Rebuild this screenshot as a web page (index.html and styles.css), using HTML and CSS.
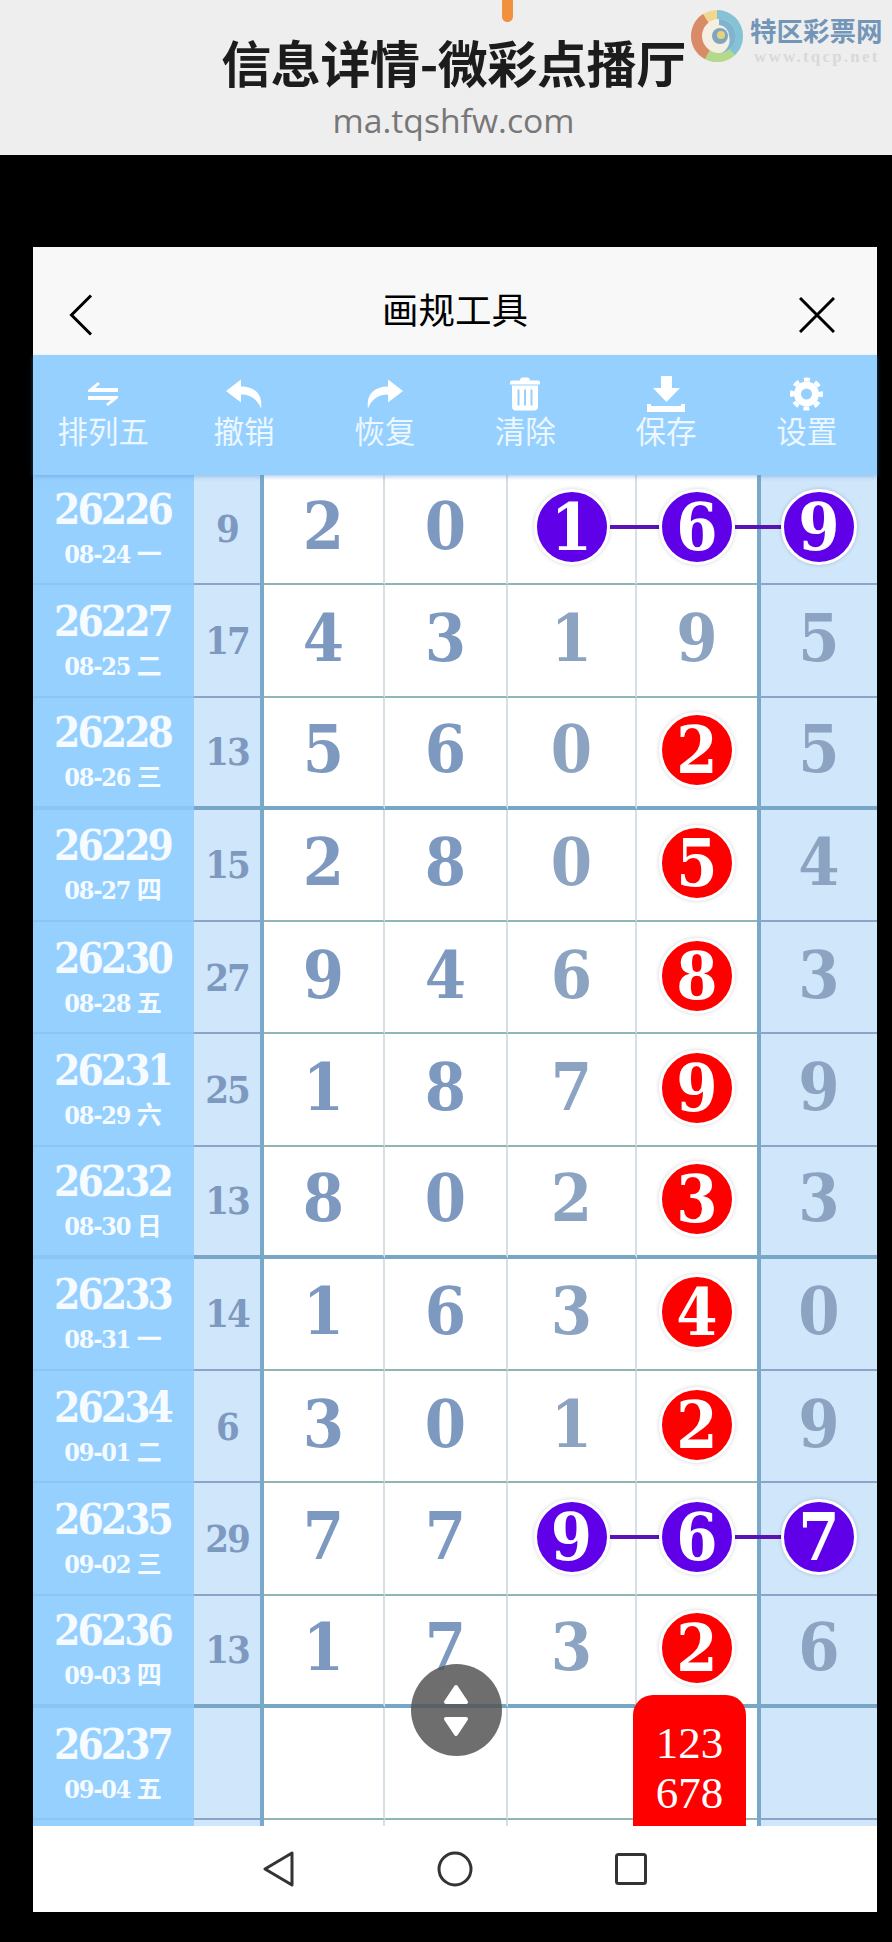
FILE: index.html
```html
<!DOCTYPE html>
<html>

<head>
    <meta charset="utf-8">
    <title>信息详情-微彩点播厅</title>
    <link rel="stylesheet" href="styles.css">
</head>

<body>
    <div class="banner">
        <span class="banner-tick"></span>
        <h1 class="banner-title">信息详情-微彩点播厅</h1>
        <div class="banner-url">ma.tqshfw.com</div>
        <div class="logo">
            <svg class="logo-mark" width="52" height="52" viewBox="0 0 52 52">
                <circle cx="26" cy="26" r="26" fill="#f1d890" />
                <path d="M26 0 A26 26 0 0 1 52 26 A26 26 0 0 1 40 48 L26 26Z" fill="#84c2d8" />
                <path d="M44 45 A26 26 0 0 1 12 48 L26 26Z" fill="#b4d98c" />
                <path d="M14 49 A26 26 0 0 1 12 4 L26 26Z" fill="#d98a66" />
                <circle cx="28" cy="26" r="17" fill="#f4efe2" />
                <path d="M28 9 A17 17 0 0 1 45 26 A17 17 0 0 1 30 43 A14 14 0 0 0 38 26 A11 11 0 0 0 28 15Z" fill="#7fb4d0" />
                <circle cx="29" cy="26" r="8" fill="#7fa5bf" />
                <circle cx="30" cy="25" r="4" fill="#e6d27c" />
            </svg>
            <div class="logo-text">
                <div class="logo-name">特区彩票网</div>
                <div class="logo-site">www.tqcp.net</div>
            </div>
        </div>
    </div>

    <div class="app">
        <div class="header">
            <svg class="header-back" width="24" height="42" viewBox="0 0 24 42">
                <path d="M22 1.5 L2.5 21 L22 40.5" fill="none" stroke="#000" stroke-width="3" />
            </svg>
            <div class="header-title">画规工具</div>
            <svg class="header-close" width="36" height="36" viewBox="0 0 36 36">
                <path d="M1 1 L35 35 M35 1 L1 35" fill="none" stroke="#000" stroke-width="3" />
            </svg>
        </div>

        <div class="toolbar">
            <div class="tool">
                <svg width="30" height="24" viewBox="0 0 30 24">
                    <path d="M0 8 L10 0 L12 2 L7 6 H30 V10 H0Z M30 16 L20 24 L18 22 L23 18 H0 V14 H30Z" fill="#fff" />
                </svg>
                <span>排列五</span>
            </div>
            <div class="tool">
                <svg width="36" height="29" viewBox="0 0 36 29">
                    <path d="M15 0 L0 11.5 L15 23 V15 C24 15 31 19 35 29 C37 15 29 7 15 7Z" fill="#fff" />
                </svg>
                <span>撤销</span>
            </div>
            <div class="tool">
                <svg class="flip" width="36" height="29" viewBox="0 0 36 29">
                    <path d="M15 0 L0 11.5 L15 23 V15 C24 15 31 19 35 29 C37 15 29 7 15 7Z" fill="#fff" />
                </svg>
                <span>恢复</span>
            </div>
            <div class="tool">
                <svg width="30" height="33" viewBox="0 0 30 33">
                    <path d="M10 3 Q10 0 13 0 H17 Q20 0 20 3 H28 Q30 3 30 5 V7 H0 V5 Q0 3 2 3Z" fill="#fff" />
                    <path d="M2 8 H28 V29 Q28 33 24 33 H6 Q2 33 2 29Z" fill="#fff" />
                    <path d="M8.5 12 V28 M15 12 V28 M21.5 12 V28" stroke="#96d0ff" stroke-width="2" />
                </svg>
                <span>清除</span>
            </div>
            <div class="tool">
                <svg width="38" height="36" viewBox="0 0 38 36">
                    <path d="M14 0 H25 V12 H33 L19.5 26 L6 12 H14Z" fill="#fff" />
                    <path d="M0 28 H4 V30 H34 V28 H38 V36 H0Z" fill="#fff" />
                </svg>
                <span>保存</span>
            </div>
            <div class="tool">
                <svg width="33" height="33" viewBox="0 0 33 33">
                    <circle cx="16.5" cy="16.5" r="9" fill="none" stroke="#fff" stroke-width="7" />
                    <circle cx="16.5" cy="16.5" r="14.5" fill="none" stroke="#fff" stroke-width="4"
                        stroke-dasharray="6 5.39" stroke-dashoffset="3" />
                </svg>
                <span>设置</span>
            </div>
        </div>

        <div class="table">
            <div class="row">
                <div class="issue"><b>26226</b><span>08-24 一</span></div>
                <div class="sum">9</div>
                <div class="num">2</div>
                <div class="num">0</div>
                <div class="num"><span class="ball purple link">1</span></div>
                <div class="num plain"><span class="ball purple link">6</span></div>
                <div class="num last"><span class="ball purple">9</span></div>
            </div>
            <div class="row">
                <div class="issue"><b>26227</b><span>08-25 二</span></div>
                <div class="sum">17</div>
                <div class="num">4</div>
                <div class="num">3</div>
                <div class="num pale">1</div>
                <div class="num plain pale">9</div>
                <div class="num last pale">5</div>
            </div>
            <div class="row row-end">
                <div class="issue"><b>26228</b><span>08-26 三</span></div>
                <div class="sum">13</div>
                <div class="num">5</div>
                <div class="num">6</div>
                <div class="num pale">0</div>
                <div class="num plain"><span class="ball red">2</span></div>
                <div class="num last pale">5</div>
            </div>
            <div class="row">
                <div class="issue"><b>26229</b><span>08-27 四</span></div>
                <div class="sum">15</div>
                <div class="num">2</div>
                <div class="num">8</div>
                <div class="num pale">0</div>
                <div class="num plain"><span class="ball red">5</span></div>
                <div class="num last pale">4</div>
            </div>
            <div class="row">
                <div class="issue"><b>26230</b><span>08-28 五</span></div>
                <div class="sum">27</div>
                <div class="num">9</div>
                <div class="num">4</div>
                <div class="num pale">6</div>
                <div class="num plain"><span class="ball red">8</span></div>
                <div class="num last pale">3</div>
            </div>
            <div class="row">
                <div class="issue"><b>26231</b><span>08-29 六</span></div>
                <div class="sum">25</div>
                <div class="num">1</div>
                <div class="num">8</div>
                <div class="num pale">7</div>
                <div class="num plain"><span class="ball red">9</span></div>
                <div class="num last pale">9</div>
            </div>
            <div class="row row-end">
                <div class="issue"><b>26232</b><span>08-30 日</span></div>
                <div class="sum">13</div>
                <div class="num">8</div>
                <div class="num">0</div>
                <div class="num pale">2</div>
                <div class="num plain"><span class="ball red">3</span></div>
                <div class="num last pale">3</div>
            </div>
            <div class="row">
                <div class="issue"><b>26233</b><span>08-31 一</span></div>
                <div class="sum">14</div>
                <div class="num">1</div>
                <div class="num">6</div>
                <div class="num pale">3</div>
                <div class="num plain"><span class="ball red">4</span></div>
                <div class="num last pale">0</div>
            </div>
            <div class="row">
                <div class="issue"><b>26234</b><span>09-01 二</span></div>
                <div class="sum">6</div>
                <div class="num">3</div>
                <div class="num">0</div>
                <div class="num pale">1</div>
                <div class="num plain"><span class="ball red">2</span></div>
                <div class="num last pale">9</div>
            </div>
            <div class="row">
                <div class="issue"><b>26235</b><span>09-02 三</span></div>
                <div class="sum">29</div>
                <div class="num">7</div>
                <div class="num">7</div>
                <div class="num"><span class="ball purple link">9</span></div>
                <div class="num plain"><span class="ball purple link">6</span></div>
                <div class="num last"><span class="ball purple">7</span></div>
            </div>
            <div class="row row-end">
                <div class="issue"><b>26236</b><span>09-03 四</span></div>
                <div class="sum">13</div>
                <div class="num">1</div>
                <div class="num">7</div>
                <div class="num pale">3</div>
                <div class="num plain"><span class="ball red">2</span></div>
                <div class="num last pale">6</div>
            </div>
            <div class="row">
                <div class="issue"><b>26237</b><span>09-04 五</span></div>
                <div class="sum"></div>
                <div class="num"></div>
                <div class="num"></div>
                <div class="num"></div>
                <div class="num plain">
                    <div class="pick">123<br>678</div>
                </div>
                <div class="num last"></div>
            </div>
            <div class="row">
                <div class="issue"></div>
                <div class="sum"></div>
                <div class="num"></div>
                <div class="num"></div>
                <div class="num"></div>
                <div class="num plain"></div>
                <div class="num last"></div>
            </div>
        </div>

        <div class="handle">
            <svg width="91" height="92" viewBox="0 0 91 92">
                <path d="M45 23 L55 38 H35Z M35 55 H55 L45 70Z" fill="#fff" stroke="#fff" stroke-width="4"
                    stroke-linejoin="round" />
            </svg>
        </div>

        <div class="nav">
            <svg width="36" height="36" viewBox="0 0 36 36">
                <path d="M31 2 V34 L4 18Z" fill="none" stroke="#333" stroke-width="3" stroke-linejoin="round" />
            </svg>
            <svg width="36" height="36" viewBox="0 0 36 36">
                <circle cx="18" cy="18" r="16" fill="none" stroke="#333" stroke-width="3" />
            </svg>
            <svg width="36" height="36" viewBox="0 0 36 36">
                <rect x="3.5" y="3.5" width="29" height="29" rx="2" fill="none" stroke="#333" stroke-width="3" />
            </svg>
        </div>
    </div>
</body>

</html>
```

FILE: styles.css
```css
html,
body {
    margin: 0;
    padding: 0;
    background-color: #000;
    font-family: "Noto Sans", "Noto Sans CJK SC", sans-serif;
}

body {
    width: 892px;
    height: 1942px;
    overflow: hidden;
}

.banner {
    position: relative;
    box-sizing: border-box;
    height: 155px;
    padding-left: 15px;
    background-color: #eee;
    text-align: center;
    overflow: hidden;
}

.banner-tick {
    position: absolute;
    left: 502px;
    top: -8px;
    width: 11px;
    height: 30px;
    border-radius: 6px;
    background-color: #f0913f;
}

.banner-title {
    margin: 0;
    padding-top: 25px;
    font-family: "Noto Sans CJK SC", sans-serif;
    font-size: 50px;
    font-weight: 700;
    letter-spacing: -0.4px;
    line-height: 72px;
    color: #1c1c1c;
}

.banner-url {
    font-family: "Open Sans", sans-serif;
    font-size: 33.7px;
    line-height: 46px;
    color: #777;
}

.logo {
    position: absolute;
    left: 691px;
    top: 10px;
    display: flex;
    gap: 7px;
}

.logo-mark {
    filter: blur(0.7px);
}

.logo-text {
    width: 134px;
    text-align: left;
}

.logo-name {
    font-family: "Noto Sans CJK SC", sans-serif;
    font-size: 26.5px;
    font-weight: 700;
    line-height: 32px;
    margin-top: 4px;
    color: #7396b8;
}

.logo-site {
    font-family: "Liberation Serif", serif;
    font-size: 17px;
    font-weight: 700;
    letter-spacing: 2.2px;
    line-height: 18px;
    margin: 2px 0 0 4px;
    color: #d9d9d9;
}

.app {
    position: relative;
    width: 844px;
    margin: 92px 0 0 33px;
    background-color: #fff;
}

.header {
    display: grid;
    grid-template-columns: 1fr auto 1fr;
    align-items: center;
    box-sizing: border-box;
    height: 108px;
    padding: 15px 36px 0;
    background-color: #f8f8f8;
}

.header-title {
    font-family: "Noto Sans CJK SC", sans-serif;
    font-size: 36.5px;
    line-height: 90px;
    color: #000;
}

.header-back {
    margin-top: 13px;
}

.header-close {
    justify-self: end;
    margin: 13px 6px 0 0;
}

.toolbar {
    position: relative;
    z-index: 2;
    display: grid;
    grid-template-columns: repeat(6, 1fr);
    box-sizing: border-box;
    height: 120px;
    padding-top: 21px;
    background-color: #96d0ff;
    box-shadow: 0 2px 4px rgba(90, 150, 210, 0.45);
}

.tool {
    display: flex;
    flex-flow: column;
    align-items: center;
    color: #ecf7ff;
    font-family: "Noto Sans CJK SC", sans-serif;
    font-size: 30.5px;
    line-height: 37px;
}

.tool svg {
    height: 36px;
}

.flip {
    transform: scaleX(-1);
}

.table {
    height: 1353px;
    margin-top: -2px;
    overflow: hidden;
    font-family: "DejaVu Serif Condensed", "Liberation Serif", serif;
    font-weight: 700;
}

.row {
    display: grid;
    grid-template-columns: 161px 70px 121px 123px 129px 120px 120px;
    height: 112.27px;
}

.issue,
.sum,
.num {
    display: flex;
    align-items: center;
    justify-content: center;
    box-sizing: border-box;
}

.issue {
    flex-flow: column;
    background-color: #96d0ff;
    border-bottom: 2px solid #8cc5f3;
    padding: 6px 2px 0 0;
    color: #f5fbff;
}

.issue b {
    font-size: 42px;
    letter-spacing: -2.9px;
    line-height: 46px;
}

.issue span {
    font-family: "DejaVu Serif Condensed", "Noto Sans CJK SC", serif;
    font-size: 25px;
    letter-spacing: -1.2px;
    line-height: 43px;
}

.sum {
    background-color: #d0e6fa;
    border-right: 4px solid #7aa8c8;
    border-bottom: 2px solid #8aa5c9;
    font-size: 38px;
    letter-spacing: -2px;
    color: #7e99bf;
}

.num {
    position: relative;
    padding-bottom: 5px;
    background-color: #fff;
    border-right: 2px solid #d6dee6;
    border-bottom: 2px solid #8fb5b5;
    font-size: 66px;
    color: #7e99bf;
}

.pale {
    color: #8ca3c1;
}

.plain {
    border-right: 0;
}

.last {
    background-color: #d0e6fa;
    border-left: 4px solid #7aa8c8;
    border-right: 0;
    border-bottom-color: #8aa5c9;
}

.row-end .issue,
.row-end .sum,
.row-end .num {
    border-bottom-width: 4px;
    border-bottom-color: #78a6c6;
}

.row-end .issue {
    border-bottom-color: #8cc5f3;
}

.ball {
    position: relative;
    z-index: 1;
    display: flex;
    align-items: center;
    justify-content: center;
    box-sizing: border-box;
    flex: none;
    width: 76px;
    height: 76px;
    margin-top: 2px;
    border: 3px solid #fff;
    border-radius: 50%;
    box-shadow: 0 0 4px rgba(0, 0, 0, 0.18);
    color: #fff;
}

.purple {
    background-color: #6000e8;
}

.red {
    background-color: #f00;
}

.link::after {
    content: "";
    position: absolute;
    left: 100%;
    top: 50%;
    width: 50px;
    height: 4px;
    margin: -2px 0 0 3px;
    background-color: #5a14b4;
}

.pick {
    position: absolute;
    z-index: 2;
    left: -4px;
    top: -13px;
    box-sizing: border-box;
    width: 113px;
    height: 150px;
    padding-top: 23px;
    border-radius: 20px 20px 0 0;
    background-color: #f00;
    text-align: center;
    font-family: "Liberation Serif", serif;
    font-size: 45px;
    font-weight: 400;
    line-height: 50px;
    color: #fff;
}

.handle {
    position: absolute;
    z-index: 3;
    left: 378px;
    top: 1417px;
    width: 91px;
    height: 92px;
    border-radius: 50%;
    background-color: rgba(85, 85, 85, 0.85);
}

.nav {
    display: flex;
    align-items: center;
    justify-content: center;
    gap: 140px;
    height: 86px;
    background-color: #fff;
}
```
